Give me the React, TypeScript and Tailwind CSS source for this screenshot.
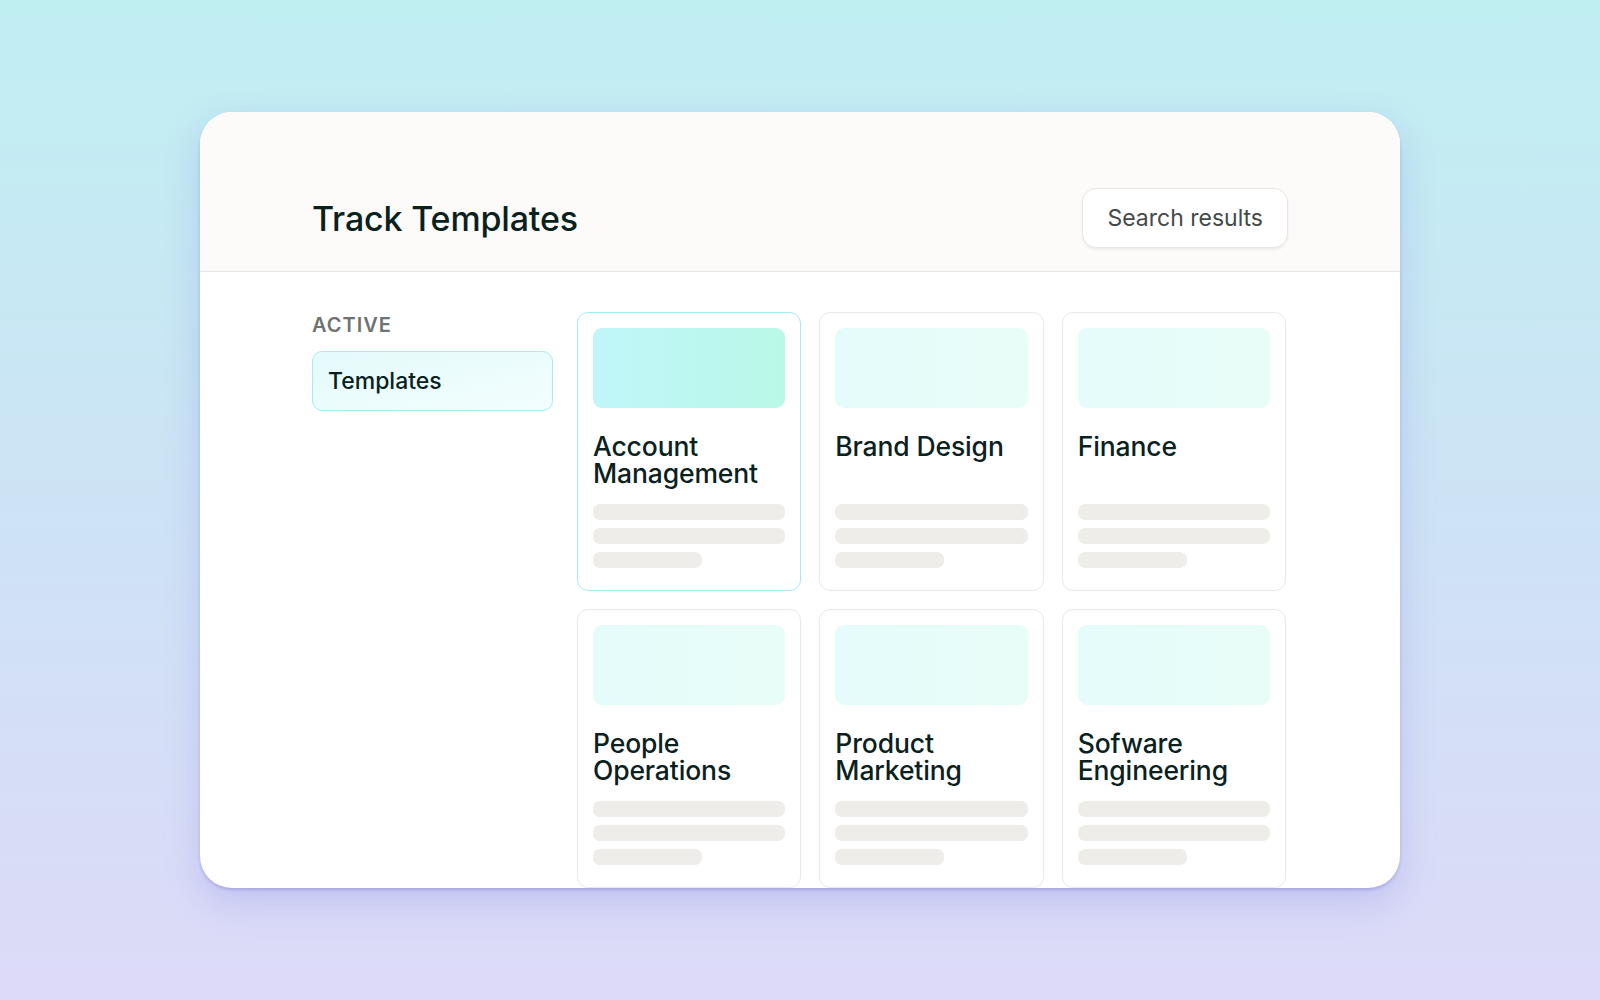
import React from "react";

const cards = [
  { title: "Account Management", active: true },
  { title: "Brand Design", active: false },
  { title: "Finance", active: false },
  { title: "People Operations", active: false },
  { title: "Product Marketing", active: false },
  { title: "Sofware Engineering", active: false },
];

function TemplateCard({ title, active }: { title: string; active: boolean }) {
  return (
    <div
      className={
        active
          ? "flex flex-col rounded-[11px] border border-[#a3edf1] bg-white px-[15px] pt-[15px] pb-[22px] h-[279px]"
          : "flex flex-col rounded-[11px] border border-[#ebe9e6] bg-white px-[15px] pt-[15px] pb-[22px] h-[279px]"
      }
    >
      <div
        className={
          active
            ? "h-[80px] rounded-[9px] bg-gradient-to-r from-[#c0f6f9] to-[#b9f8e7]"
            : "h-[80px] rounded-[9px] bg-gradient-to-r from-[#e5fcfc] to-[#e8fdf7]"
        }
      />
      <div className="mt-[25px] h-[54px] pr-[20px] text-[26.5px] leading-[27px] font-medium text-[#0a211e] tracking-[-0.005em]">
        {title}
      </div>
      <div className="mt-[17px] flex flex-col gap-[8px]">
        <div className="h-[16px] rounded-[7px] bg-[#efedea]" />
        <div className="h-[16px] rounded-[7px] bg-[#efedea]" />
        <div className="h-[16px] w-[109px] rounded-[7px] bg-[#efedea]" />
      </div>
    </div>
  );
}

export default function App() {
  return (
    <div
      className="min-h-screen w-full flex items-center justify-center bg-gradient-to-b from-[#c0eff2] via-[#cde3f5] to-[#dddaf8]"
      style={{ fontFamily: "Inter, 'Noto Sans', sans-serif" }}
    >
      <div className="w-[1200px] h-[776px] overflow-hidden rounded-[32px] bg-white shadow-[0_2px_3px_rgba(80,80,170,0.25),0_14px_36px_rgba(100,100,220,0.22)]">
        <div className="flex items-center justify-between bg-[#fcfbfa] border-b border-[#e6e5e3] pl-[112px] pr-[112px] pt-[76px] pb-[23px]">
          <h1 className="text-[34px] leading-[40px] font-medium text-[#0a211e] tracking-[-0.005em] translate-y-[1px]">
            Track Templates
          </h1>
          <div className="h-[60px] flex items-center rounded-[14px] border border-[#e7e5e3] bg-white px-[24px] text-[23px] text-[#454a49] shadow-[0_2px_3px_rgba(0,0,0,0.05)]">
            Search results
          </div>
        </div>
        <div className="flex gap-[24px] px-[112px] pt-[40px]">
          <div className="w-[241px] shrink-0">
            <div className="text-[20px] leading-[24px] font-semibold tracking-[0.05em] text-[#6e7372] translate-y-[1px]">
              ACTIVE
            </div>
            <div className="mt-[15px] h-[60px] flex items-center rounded-[10px] border border-[#a6edf1] bg-gradient-to-br from-[#e4fafb] to-[#f3fefe] px-[15px] text-[23px] font-medium text-[#0a211e]">
              Templates
            </div>
          </div>
          <div className="w-[709px] grid grid-cols-3 gap-[18px]">
            {cards.map((c) => (
              <TemplateCard key={c.title} title={c.title} active={c.active} />
            ))}
          </div>
        </div>
      </div>
    </div>
  );
}
